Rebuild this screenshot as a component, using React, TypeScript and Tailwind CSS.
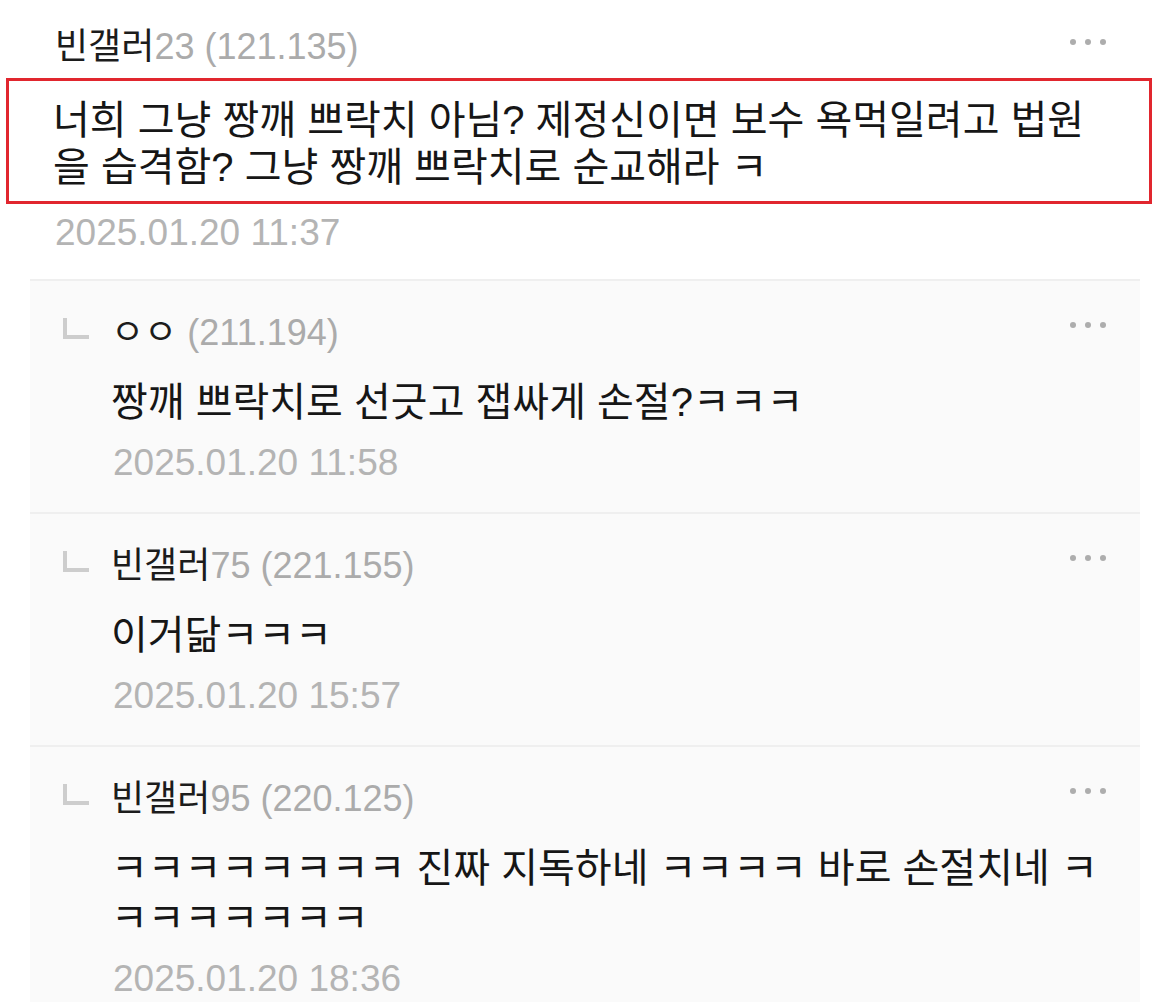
const FONT = "font-['Liberation_Sans','Noto_Sans_CJK_KR',sans-serif]";

type Reply = {
  nick: string;
  nickSuffix: string;
  ip: string;
  lines: string;
  date: string;
};

const replies: Reply[] = [
  {
    nick: "ㅇㅇ",
    nickSuffix: " ",
    ip: "(211.194)",
    lines: "짱깨 쁘락치로 선긋고 잽싸게 손절?ㅋㅋㅋ",
    date: "2025.01.20 11:58",
  },
  {
    nick: "빈갤러",
    nickSuffix: "75 ",
    ip: "(221.155)",
    lines: "이거닮ㅋㅋㅋ",
    date: "2025.01.20 15:57",
  },
  {
    nick: "빈갤러",
    nickSuffix: "95 ",
    ip: "(220.125)",
    lines:
      "ㅋ".repeat(8) +
      " 진짜 지독하네 " +
      "ㅋ".repeat(4) +
      " 바로 손절치네 " +
      "ㅋ".repeat(8),
    date: "2025.01.20 18:36",
  },
];

function MoreDots() {
  return (
    <div className="flex items-center gap-[9px]">
      <span className="h-[6px] w-[6px] rounded-full bg-[#adadad]" />
      <span className="h-[6px] w-[6px] rounded-full bg-[#adadad]" />
      <span className="h-[6px] w-[6px] rounded-full bg-[#adadad]" />
    </div>
  );
}

function ReplyArrow() {
  return (
    <svg width="28" height="22" viewBox="0 0 28 22" className="shrink-0">
      <path d="M3 0 V19 H27" fill="none" stroke="#cdcdcd" strokeWidth="4" />
    </svg>
  );
}

function ReplyRow({ reply }: { reply: Reply }) {
  return (
    <div className="relative border-t-2 border-[#efefef] pb-[29px] pl-[81px] pr-[32px] pt-[32px]">
      <div className="absolute left-[32px] top-[37px]">
        <ReplyArrow />
      </div>
      <div className="flex h-[40px] items-center justify-between">
        <div className="text-[36px] leading-[40px] whitespace-nowrap">
          <span className="text-[#1c1c1c]">{reply.nick}</span>
          <span className="text-[#ababab]">
            {reply.nickSuffix}
            {reply.ip}
          </span>
        </div>
        <div className="-mt-[16px] mr-[2px]">
          <MoreDots />
        </div>
      </div>
      <p className="mt-[24px] text-[40px] leading-[50px] text-[#161616]">
        {reply.lines}
      </p>
      <div className="mt-[16px] pl-[2px] text-[37px] leading-[40px] text-[#b4b4b4]">
        {reply.date}
      </div>
    </div>
  );
}

export default function App() {
  return (
    <div className={`${FONT} min-h-screen w-[1170px] bg-white`}>
      <div className="pt-[27px]">
        <div className="flex h-[40px] items-center justify-between pl-[55px] pr-[64px]">
          <div className="text-[36px] leading-[40px] whitespace-nowrap">
            <span className="text-[#1c1c1c]">빈갤러</span>
            <span className="text-[#ababab]">23 (121.135)</span>
          </div>
          <div className="-mt-[10px]">
            <MoreDots />
          </div>
        </div>
        <div className="ml-[6px] mt-[11px] w-[1146px] border-[3px] border-[#e1262e] pb-[10px] pl-[44px] pr-[41px] pt-[16px]">
          <p className="text-[40px] leading-[47px] text-[#161616]">
            너희 그냥 짱깨 쁘락치 아님? 제정신이면 보수 욕먹일려고 법원을 습격함? 그냥 짱깨 쁘락치로 순교해라 ㅋ
          </p>
        </div>
        <div className="mt-[9px] pb-[26px] pl-[55px] text-[37px] leading-[40px] text-[#b4b4b4]">
          2025.01.20 11:37
        </div>
      </div>
      <div className="ml-[30px] w-[1110px] bg-[#fafafa]">
        {replies.map((reply, i) => (
          <ReplyRow key={i} reply={reply} />
        ))}
      </div>
    </div>
  );
}
